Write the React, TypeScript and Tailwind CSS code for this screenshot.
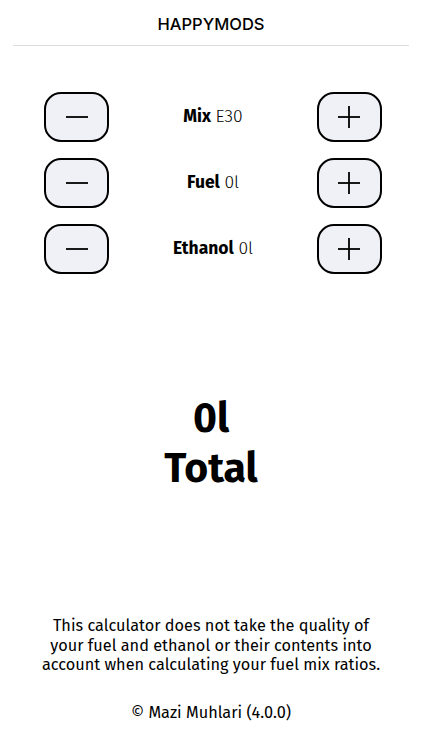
import { useState } from 'react';

const body = { fontFamily: '"Fira Sans", "Open Sans", "Noto Sans", sans-serif' };

function StepButton({ kind, onClick }: { kind: 'minus' | 'plus'; onClick: () => void }) {
  return (
    <button
      type="button"
      onClick={onClick}
      className="w-[65px] h-[50px] rounded-[17px] border-2 border-black bg-[#f0f1f6] flex items-center justify-center"
    >
      <svg width="24" height="24" viewBox="0 0 24 24" fill="none" stroke="black" strokeWidth="1.8">
        <path d="M1 12h22" />
        {kind === 'plus' && <path d="M12 1v22" />}
      </svg>
    </button>
  );
}

export default function App() {
  const [mix, setMix] = useState(30);
  const [fuel, setFuel] = useState(0);
  const [ethanol, setEthanol] = useState(0);

  const rows = [
    { label: 'Mix', value: `E${mix}`, dec: () => setMix(Math.max(0, mix - 5)), inc: () => setMix(Math.min(100, mix + 5)) },
    { label: 'Fuel', value: `${fuel}l`, dec: () => setFuel(Math.max(0, fuel - 1)), inc: () => setFuel(fuel + 1) },
    { label: 'Ethanol', value: `${ethanol}l`, dec: () => setEthanol(Math.max(0, ethanol - 1)), inc: () => setEthanol(ethanol + 1) },
  ];

  return (
    <div className="w-[422px] h-[750px] bg-white flex flex-col text-black">
      <header className="mx-[13px] h-[46px] border-b border-[#dedede] flex items-center justify-center">
        <h1 className="text-[16.5px] font-medium pt-[3px]" style={{ fontFamily: 'Inter, "Liberation Sans", sans-serif' }}>
          HAPPYMODS
        </h1>
      </header>

      <div className="flex flex-col gap-[16px] mt-[46px] pl-[44px] pr-[40px]" style={body}>
        {rows.map((r) => (
          <div key={r.label} className="flex items-center justify-between">
            <StepButton kind="minus" onClick={r.dec} />
            <div className="text-[17.5px]">
              <span className="font-bold">{r.label}</span> <span className="font-light">{r.value}</span>
            </div>
            <StepButton kind="plus" onClick={r.inc} />
          </div>
        ))}
      </div>

      <div className="flex flex-col items-center mt-[120px] text-[41px] font-bold leading-[50px]" style={body}>
        <div>{fuel + ethanol}l</div>
        <div>Total</div>
      </div>

      <div className="flex-1" />

      <div className="px-[36px] text-center text-[16.3px] leading-[19.5px]" style={body}>
        <p>
          This calculator does not take the quality of your fuel and ethanol or their contents into account when
          calculating your fuel mix ratios.
        </p>
        <p className="mt-[28px] mb-[28px]">© Mazi Muhlari (4.0.0)</p>
      </div>
    </div>
  );
}
